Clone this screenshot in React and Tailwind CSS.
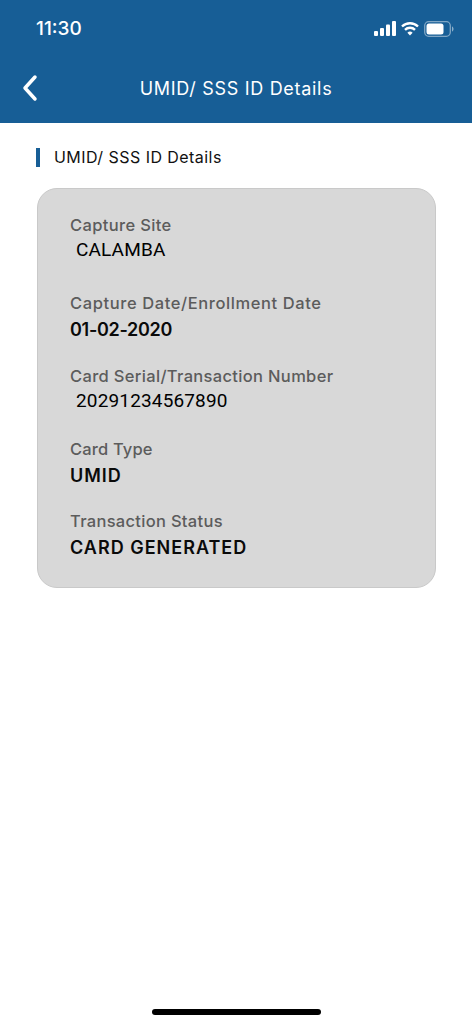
import React from "react";

const details = [
  { label: "Capture Site", value: "CALAMBA", roboto: true, labelClass: "tracking-[0.35px]", valueClass: "mt-[3px]" },
  { label: "Capture Date/Enrollment Date", value: "01-02-2020", labelClass: "mt-[33px] tracking-[0.6px]", valueClass: "mt-[6px] tracking-[-0.3px]" },
  { label: "Card Serial/Transaction Number", value: "20291234567890", roboto: true, labelClass: "mt-[26px] tracking-[0.33px]", valueClass: "mt-[3px]" },
  { label: "Card Type", value: "UMID", labelClass: "mt-[28px] tracking-[0.15px]", valueClass: "mt-[6px] tracking-[1px]" },
  { label: "Transaction Status", value: "CARD GENERATED", labelClass: "mt-[25px] tracking-[0.3px]", valueClass: "mt-[6px] tracking-[1px]" },
];

const App = () => {
  return (
    <div className="relative h-[1024px] w-[472px] overflow-hidden bg-white font-['Inter',sans-serif]">
      <header className="h-[123px] bg-[#175e96] text-white">
        <div className="flex h-[57px] items-center justify-between pl-[36px] pr-[18px]">
          <span className="pt-[2px] text-[19px] font-medium">11:30</span>
          <div className="flex items-center gap-[5px]">
            <svg width="22" height="15" viewBox="0 0 22 15" fill="#fff">
              <rect x="0" y="10" width="4" height="5" rx="1" />
              <rect x="6" y="7" width="4" height="8" rx="1" />
              <rect x="12" y="3.500" width="4" height="11.500" rx="1" />
              <rect x="18" y="0" width="4" height="15" rx="1" />
            </svg>
            <svg width="18" height="15" viewBox="0 0 18 15" fill="none" stroke="#fff" strokeWidth="2.400">
              <path d="M1 5.500a11.500 11.500 0 0 1 16 0" />
              <path d="M4 8.800a7 7 0 0 1 10 0" />
              <path d="M9 14.500 6.400 11.800a3.700 3.700 0 0 1 5.200 0z" fill="#fff" stroke="none" />
            </svg>
            <svg width="30" height="16" viewBox="0 0 30 16" fill="none">
              <rect x="0.700" y="0.700" width="25.600" height="14.600" rx="4" stroke="#fff" strokeOpacity="0.45" strokeWidth="1.300" />
              <rect x="2.500" y="2.500" width="17" height="11" rx="2.500" fill="#fff" />
              <path d="M28 5.500c1 .3 1.500 1.300 1.500 2.500s-.5 2.200-1.500 2.500z" fill="#fff" fillOpacity="0.5" />
            </svg>
          </div>
        </div>
        <div className="relative flex h-[62px] items-center justify-center">
          <svg className="absolute left-[22px] top-[17px]" width="16" height="28" viewBox="0 0 16 28" fill="none" stroke="#fff" strokeWidth="3.500" strokeLinecap="round" strokeLinejoin="round">
            <path d="M13 3 3 14l10 11" />
          </svg>
          <h1 className="text-[18px] font-normal tracking-[0.7px]">UMID/ SSS ID Details</h1>
        </div>
      </header>

      <main className="px-[37px] pt-[25px]">
        <div className="-ml-px flex h-[19px] items-center border-l-4 border-[#175e96] pl-[14px]">
          <h2 className="-mt-[2px] text-[16px] tracking-[0.45px] text-[#111]">UMID/ SSS ID Details</h2>
        </div>

        <section className="mt-[21px] h-[400px] w-[399px] rounded-[20px] border border-[#c9c9c9] bg-[#d8d8d8] pl-[32px] pt-[27px]">
          {details.map((item) => (
            <div key={item.label}>
              <p className={`text-[16.5px] font-medium leading-[19px] text-[#5c5c5c] ${item.labelClass}`}>
                {item.label}
              </p>
              {item.roboto ? (
                <p className={`pl-[6px] font-['Roboto',sans-serif] text-[19px] font-[450] leading-[23px] tracking-[0.15px] text-black ${item.valueClass}`}>
                  {item.value}
                </p>
              ) : (
                <p className={`text-[18px] font-semibold leading-[22px] text-[#0a0a0a] ${item.valueClass}`}>
                  {item.value}
                </p>
              )}
            </div>
          ))}
        </section>
      </main>

      <div className="absolute bottom-[9px] left-[152px] h-[6px] w-[169px] rounded-full bg-black" />
    </div>
  );
};

export default App;
